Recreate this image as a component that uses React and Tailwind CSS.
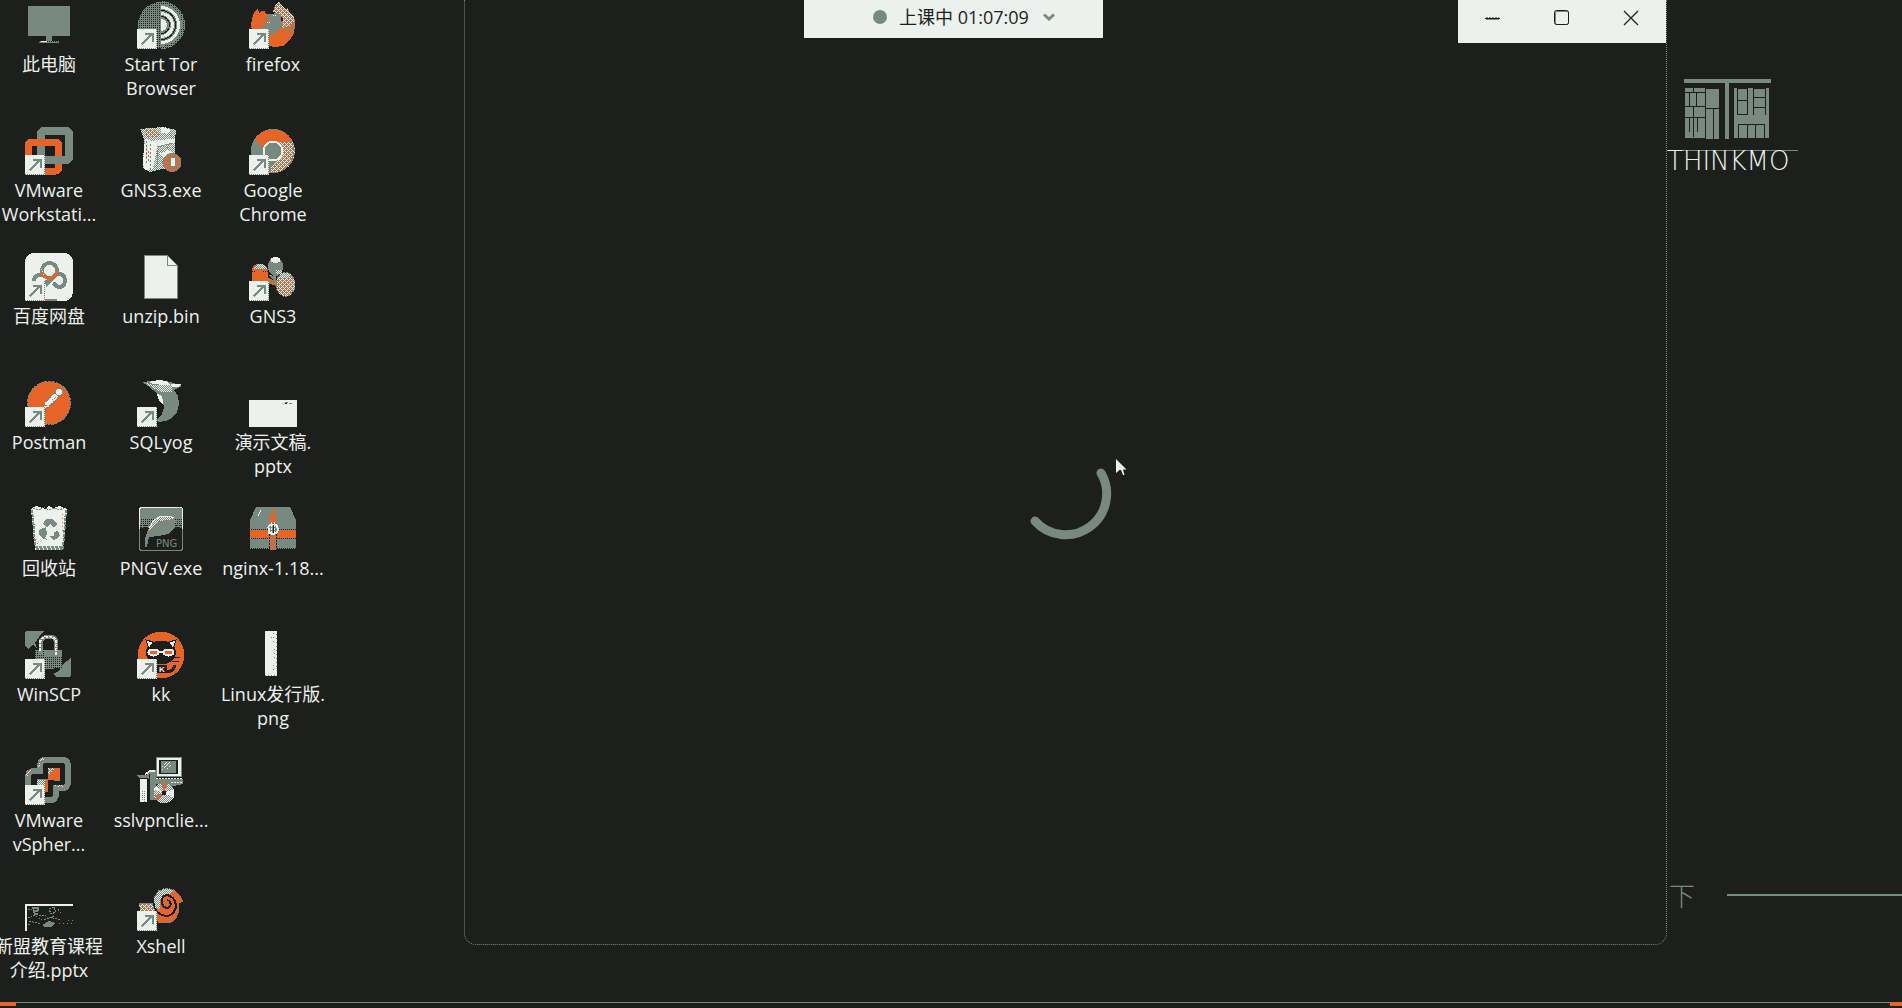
import React from "react";

const D = "#1d1f1c";
const S = "#788a80";
const W = "#edf1ee";
const O = "#e66428";

const SD = "url(#sage-dark)";
const SW = "url(#sage-white)";
const OS = "url(#orange-sage)";
const OW = "url(#orange-white)";

function Checker({ id, a, b, diagonal = true }) {
  return (
    <pattern id={id} width="2" height="2" patternUnits="userSpaceOnUse">
      <rect width="2" height="2" fill={a} />
      <rect width="1" height="1" fill={b} />
      {diagonal && <rect x="1" y="1" width="1" height="1" fill={b} />}
    </pattern>
  );
}

function Patterns() {
  return (
    <svg className="absolute size-0" aria-hidden="true">
      <defs>
        <Checker id="sage-dark" a={S} b={D} diagonal={false} />
        <Checker id="sage-white" a={S} b={W} />
        <pattern id="orange-sage" width="4" height="3" patternUnits="userSpaceOnUse">
          <rect width="4" height="3" fill={O} />
          <path d="M0 0.500H1M2 1.500H3M1 2.500H2M3 0.500H4" stroke={S} />
        </pattern>
        <pattern id="orange-white" width="4" height="4" patternUnits="userSpaceOnUse">
          <rect width="4" height="4" fill={S} />
          <path d="M0 0.500H1M2 0.500H3M1 1.500H2M0 2.500H1M2 2.500H3M3 3.500H4" stroke={W} />
          <path d="M1 0.500H2M3 1.500H4M1 2.500H2M0 3.500H1M2 3.500H3" stroke={O} />
        </pattern>
      </defs>
    </svg>
  );
}

function Shortcut() {
  return (
    <g>
      <rect x="0" y="28" width="20" height="20" fill={W} />
      <path d="M0 47.500H20M19.500 28V48" stroke={S} strokeDasharray="1 1" fill="none" />
      <path d="M4.500 43.500L15 33M7.500 33H15.500V40.500" stroke={S} strokeWidth="2" fill="none" />
    </g>
  );
}

const art = {
  pc: (
    <>
      <rect x="3" y="5" width="42" height="30" fill={S} />
      <rect x="21" y="35" width="6" height="6" fill={S} />
      <rect x="14" y="40" width="20" height="2" fill={SD} />
      <rect x="16" y="40" width="6" height="1" fill={W} />
      <rect x="18" y="41" width="14" height="1" fill={S} />
    </>
  ),
  tor: (
    <>
      <circle cx="24" cy="24" r="23" fill={SD} />
      <path d="M24 3A21 21 0 0 1 24 45Z" fill={S} />
      <path d="M24 1.500A22.500 22.500 0 0 1 24 46.500" stroke={SD} strokeWidth="3" fill="none" />
      <path d="M24 18A6 6 0 0 1 24 30Z" fill={W} />
      <path d="M24 12.500A11.500 11.500 0 0 1 24 35.500M24 6.500A17.500 17.500 0 0 1 24 41.500" stroke={W} strokeWidth="3" fill="none" />
      <path d="M24 15.500A8.500 8.500 0 0 1 24 32.500M24 9.500A14.500 14.500 0 0 1 24 38.500" stroke={D} strokeWidth="1" fill="none" />
    </>
  ),
  firefox: (
    <>
      <path d="M2 23L4 14L6 10L9 7L10 12L13 10L16 10L17 13L22 13L33 20L45 24L45 32L41 39L34 45L25 46L16 44L8 39L3 31Z" fill={O} />
      <path d="M25 7L27 3L30 0L33 5L36 8L39 7L40 11L44 14L46 19V28L38 32L33 26L34 18L30 13L24 11Z" fill={OW} />
      <path d="M46 20V27L44 33L37 34L35 27L42 24Z" fill={OS} />
      <path d="M16 17L21 13L28 12L32 16L33 25L28 32L20 34L14 30L11 25L14 21L20 19Z" fill={S} />
      <path d="M13 19L16 21L22 20L18 24L12 26Z" fill={OS} />
      <path d="M18 21H21M24 14H28" stroke={W} strokeDasharray="1 1" />
    </>
  ),
  vmware: (
    <>
      <rect x="16" y="4" width="28" height="29" rx="3" fill="none" stroke={S} strokeWidth="8" />
      <rect x="3.500" y="15" width="30" height="29" rx="3" fill="none" stroke={O} strokeWidth="7" />
      <path d="M20 33H44" stroke={S} strokeWidth="8" />
    </>
  ),
  gnsBox: (
    <>
      <path d="M3 2L12 1L27 0L39 3L38 14L38 29L37 40L25 42L13 45L6 41L7 12Z" fill={SW} />
      <path d="M8 12L15 14L20 13L38 12V16L20 20L16 42L8 43L6 38Z" fill={W} />
      <path d="M9 3L22 2L20 6L25 9L14 11L8 8Z" fill={OW} />
      <path d="M24 0V6L31 7L33 3L28 1ZM22 27L31 23L36 25L27 30Z" fill={W} />
      <path d="M9 14V38M13 17V42" stroke={S} strokeDasharray="2 2" />
      <path d="M9 21L10 30M11 24V34M29 21L35 18" stroke={O} strokeDasharray="2 2" />
      <path d="M20 20L36 16M21 23L20 38" stroke={S} />
      <circle cx="35" cy="35.500" r="9.500" fill={OS} />
      <circle cx="35" cy="35.500" r="9" fill="none" stroke={S} />
      <rect x="33" y="30" width="5" height="9" fill={W} stroke={S} />
    </>
  ),
  chrome: (
    <>
      <circle cx="24" cy="24" r="22" fill={S} />
      <path d="M24 24L15 22L6 12A22 22 0 0 1 42 12L44 16H26Z" fill={O} />
      <path d="M24 15H44A22 22 0 0 1 25 46L20 44L32 27Z" fill={OW} />
      <path d="M43 16A22 22 0 0 1 25 46" stroke={S} strokeDasharray="2 1" fill="none" />
      <circle cx="24" cy="24" r="9.500" fill={S} stroke={W} strokeWidth="2" />
    </>
  ),
  baidu: (
    <>
      <rect width="48" height="48" rx="9" fill={W} />
      <path d="M9 28Q9 21 18 22M31 21Q40 20 40 28Q39 35 33 34L28 30" stroke={S} strokeWidth="4" fill="none" />
      <path d="M20 27L30 25L21 35Z" fill={S} />
      <circle cx="24.500" cy="17.500" r="7.500" fill={W} stroke={S} strokeWidth="4" />
      <path d="M17 19Q18 25 24.500 25.500Q31 25 32 18" stroke={O} strokeWidth="3" fill="none" />
      <path d="M16 16L19 22" stroke={W} strokeDasharray="1 1" />
      <path d="M20 47H32" stroke={S} strokeWidth="2" />
      <path d="M20 47H23" stroke={O} />
    </>
  ),
  file: (
    <>
      <path d="M7.500 2.500H30.500L40.500 12.500V45.500H7.500Z" fill={W} stroke={S} />
      <path d="M30.500 2.500V12.500H40.500" fill="none" stroke={S} />
    </>
  ),
  gns: (
    <>
      <path d="M18 24L30 30L27 33L19 30Z" fill={OS} />
      <path d="M19 22L27 23V29Z" fill={S} />
      <path d="M3 17Q4 11 11 11Q18 11 19 17V28H3Z" fill={O} />
      <path d="M5 16Q6 11 11 11Q16 11 18 16Z" fill={SW} />
      <path d="M3 18H7M14 18H19" stroke={D} strokeDasharray="1 1" />
      <ellipse cx="26.500" cy="13.500" rx="7.500" ry="9.500" fill={S} />
      <ellipse cx="26.500" cy="7" rx="4.500" ry="3" fill={W} />
      <rect x="27" y="17" width="6" height="4" fill={SW} />
      <ellipse cx="36.500" cy="31.500" rx="9.500" ry="12" fill={OW} stroke={S} strokeDasharray="2 1" />
      <ellipse cx="36" cy="22.500" rx="5" ry="3" fill={SW} />
    </>
  ),
  postman: (
    <>
      <circle cx="24" cy="24" r="21.500" fill={O} stroke={S} strokeDasharray="3 1" />
      <path d="M19 25L28 15L31 14L33 17L32 20L23 28Z" fill={W} stroke={S} strokeDasharray="2 1" />
      <path d="M18 28L23 26L25 27L20 29Z" fill={W} />
      <circle cx="34" cy="13" r="3.500" fill={W} stroke={S} />
      <path d="M27 21L32 18" stroke={S} strokeDasharray="1 1" />
    </>
  ),
  dolphin: (
    <>
      <path d="M5 3L14 2L23 1L34 3L45 7L37 11L41 17L42 25L40 33L35 39L29 42L21 43L20 40L25 35L27 29L26 22L21 15L11 7Z" fill={S} />
      <path d="M9 4L16 6H36L35 13L24 13L16 9Z" fill={SW} />
      <path d="M14 2L23 1L29 2L33 6H25L12 4ZM33 5L44 5L42 8L36 8Z" fill={W} />
      <path d="M20 15L24 16L26 21L26 26L22 21Z" fill={W} />
      <path d="M22 26L26 27L25 35L21 39Z" fill={D} />
    </>
  ),
  slide: (
    <>
      <rect y="21" width="48" height="27" fill={W} />
      <path d="M36 23.500H39M40 24.500H43" stroke={S} />
      <path d="M36 24.500H38" stroke={D} />
    </>
  ),
  bin: (
    <>
      <path d="M6 4L11 1L20 4L24 1L28 3L35 1L42 4L38 45H10Z" fill={W} />
      <path d="M8 3L14 5L19 2L23 5L29 3L34 5L39 3" stroke={S} fill="none" strokeDasharray="2 1" />
      <path d="M6.500 5L8 12L10 41M41 5L38 44M10 41.500H38M11 44H38" stroke={S} strokeWidth="2" fill="none" strokeDasharray="3 1" />
      <path d="M37 9V26M12 38V42" stroke={O} strokeDasharray="1 3" />
      <path d="M18 19L21 14H28L32 19L29 22L25 19L22 22ZM14 25L21 22L22 29L20 33L23 35L18 34L14 30ZM29 27L33 26L35 31L31 34L28 35L25 31L29 31Z" fill={S} />
    </>
  ),
  png: (
    <>
      <rect x="2.500" y="2.500" width="43" height="43" rx="3" fill={D} stroke={S} />
      <rect x="3" y="3" width="42" height="13" fill={S} />
      <rect x="3" y="13" width="42" height="10" fill={SD} />
      <path d="M3 20H12M36 20H45M3 22H10M38 22H45" stroke={D} strokeDasharray="2 1" />
      <path d="M2.500 24V5Q2.500 2.500 5 2.500H43Q45.500 2.500 45.500 5V24" fill="none" stroke={W} />
      <path d="M8 42V33L11 25L15 17L22 12L31 10L37 12L39 16L37 24L31 29L22 31L12 32L10 42Z" fill={S} />
      <path d="M12 24L17 15L24 11H31L37 14L31 15L23 16L18 19L12 26Z" fill={SW} />
      <path d="M12 23L17 15L24 11H32L37 13" stroke={W} fill="none" />
      <path d="M11 27L18 20L25 17L36 15" stroke={O} strokeDasharray="1 2" fill="none" />
      <text x="19" y="42" fill={S} fontFamily="DejaVu Sans, sans-serif" fontSize="10">PNG</text>
    </>
  ),
  chest: (
    <>
      <path d="M7 2H41L47 15V24H1V15Z" fill={S} />
      <rect x="1" y="25" width="46" height="8" fill={O} />
      <path d="M1 24.500H47M1 33.500H47" stroke={S} strokeDasharray="1 1" />
      <rect x="1" y="34" width="46" height="9" fill={S} />
      <path d="M1 43.500H47" stroke={S} strokeDasharray="1 1" />
      <path d="M24 2L20 16H28Z" fill={O} />
      <rect x="21" y="16" width="6" height="29" fill={OS} />
      <path d="M20.500 29V43M27.500 29V43" stroke={D} strokeDasharray="2 1" />
      <rect x="19.500" y="19.500" width="9" height="9" rx="3" fill={S} stroke={W} strokeWidth="2" />
      <path d="M22.500 17V30M25.500 17V30" stroke={W} strokeDasharray="2 1" />
      <path d="M24 20V28" stroke={D} />
      <path d="M9 11L12 5" stroke={W} />
    </>
  ),
  winscp: (
    <>
      <path d="M0 1L2 0H19L14 6L10 12L12 17L8 14L3 18L0 15Z" fill={S} />
      <path d="M46 27V44L44 46H32L28 43L34 40L37 34Z" fill={S} />
      <path d="M10 19H37V37L20 38L10 28Z" fill={SD} />
      <rect x="20" y="19" width="17" height="6" fill={S} />
      <path d="M16 24V12Q16 6 22 6H26Q31 6 31 12V24" fill="none" stroke={S} strokeWidth="4" />
      <path d="M15 20V11Q16 6 22 6H26Q31 7 31 12V24" fill="none" stroke={W} strokeWidth="2" strokeDasharray="3 1" />
      <path d="M20 6H26M31 14V20" fill="none" stroke={O} strokeDasharray="1 3" />
    </>
  ),
  kk: (
    <>
      <circle cx="24" cy="24" r="23.500" fill={O} />
      <ellipse cx="24" cy="21.500" rx="15" ry="12" fill={D} />
      <path d="M9 9L16 11L12 18ZM39 9L32 11L36 18Z" fill={W} stroke={D} />
      <path d="M12 21H36" stroke={W} strokeWidth="2" />
      <ellipse cx="16.500" cy="21.500" rx="5" ry="3" fill={O} stroke={W} strokeWidth="2" />
      <ellipse cx="31.500" cy="21.500" rx="5" ry="3" fill={O} stroke={W} strokeWidth="2" />
      <path d="M35 27L43 26M35 30L42 31" stroke={D} />
      <path d="M29 40Q36 42 38 34" stroke={D} strokeWidth="3" fill="none" />
      <rect x="20" y="34" width="10" height="8" fill={D} />
      <text x="22" y="41" fill={W} fontFamily="Liberation Sans, sans-serif" fontSize="8" fontWeight="700">K</text>
    </>
  ),
  strip: (
    <>
      <rect x="16" width="12" height="45" fill={W} />
      <path d="M24.500 2V12M27.500 3V38M25.500 18V30M22.500 6V9M24.500 34V41" stroke={S} strokeDasharray="1 3" />
      <path d="M16 44.500H28" stroke={S} strokeDasharray="1 2" />
    </>
  ),
  vsphere: (
    <>
      <path d="M19 3H37Q43 3 43 9V25Q43 31 37 31H31V37Q31 43 25 43H9Q3 43 3 37V20Q3 14 9 14H15V9Q15 3 21 3Z" fill={D} stroke={S} strokeWidth="6" />
      <path d="M14 10Q14 2 20 2M2 20Q3 13 8 13M30 29H40" stroke={OW} strokeWidth="2" fill="none" strokeDasharray="2 1" />
      <rect x="23" y="11" width="12" height="12" fill={O} />
      <path d="M23 11H31L23 19Z" fill={OW} />
      <rect x="12" y="22" width="11" height="6" fill={SW} />
      <rect x="20" y="23" width="3" height="12" fill={O} />
      <path d="M29 23H35M12 22.500H23" stroke={S} />
    </>
  ),
  installer: (
    <>
      <path d="M10 17L13 13H19V43H12V24Z" fill={S} />
      <path d="M12 13.500H18M8 17L12 15" stroke={W} strokeWidth="2" />
      <rect x="12" y="17" width="1" height="26" fill={D} />
      <path d="M0 18H11V21H2Z" fill={S} />
      <rect x="3" y="22" width="7" height="23" fill={W} />
      <path d="M5.500 34V44M7.500 34V45" stroke={S} strokeDasharray="1 1" />
      <rect x="19" y="0" width="26" height="20" fill={S} />
      <rect x="20" y="1" width="24" height="18" fill={W} />
      <rect x="22" y="3" width="19" height="14" fill={D} />
      <rect x="24" y="4" width="15" height="12" fill={S} />
      <path d="M25 13L33 5M25 10L30 5M30 12L34 8" stroke={W} strokeDasharray="2 1" />
      <path d="M19 22H46V27L36 29L19 27Z" fill={S} />
      <path d="M19 21.500H45M34 25.500H45" stroke={W} strokeDasharray="2 1" />
      <circle cx="27" cy="36" r="10.500" fill={SW} />
      <path d="M27 36L24 26H31ZM27 36L17 38L21 44Z" fill={OS} />
      <path d="M27 36L37 32V41ZM27 36L17 33L19 30Z" fill={W} />
      <circle cx="27" cy="36" r="2.500" fill={D} />
    </>
  ),
  poster: (
    <>
      <path d="M1 48V22H48" fill="none" stroke={W} strokeWidth="2" />
      <path d="M7 24H14L13 32H9ZM17 42L24 38L31 40L26 44H20Z" fill={S} />
      <path d="M9 26H12M10 29H13" stroke={D} />
      <path d="M3 26H7M3 35L9 32L17 37M4 38L16 41M14 32H21M24 26L29 24L31 29L26 31ZM24 34L36 37M19 37L30 33M33 26L36 31M3 42L6 40" fill="none" stroke={S} strokeDasharray="2 1" />
      <path d="M34 40.500H48M43 37.500H48" stroke={S} strokeDasharray="1 3" />
    </>
  ),
  shell: (
    <>
      <path d="M2 21L15 20L18 26L22 35L5 36Z" fill={OW} />
      <path d="M2 20.500H15L18 27" stroke={S} fill="none" />
      <path d="M17 15L21 8L29 5L37 7L43 13L46 19L42 20L42 29L39 36L33 40H21L19 31Z" fill={O} />
      <path d="M17 15L21 8L29 5L36 7L34 11L27 12L23 17V26L18 25Z" fill={SW} />
      <path d="M17 15L21 8L29 5L37 7L43 13L46 19M42 22L41 30L38 36L33 40L22 39" stroke={S} fill="none" strokeDasharray="3 1" />
      <path d="M18 25Q21 33 31 33Q39 30 39 22Q37 13 30 12Q24 13 25 20Q26 25 31 25Q35 23 33 19L30 17" stroke={D} strokeWidth="2" fill="none" />
      <circle cx="30" cy="20" r="2" fill={OS} />
    </>
  ),
};

const items = [
  ["pc", false, ["此电脑"]],
  ["vmware", true, ["VMware", "Workstati..."]],
  ["baidu", true, ["百度网盘"]],
  ["postman", true, ["Postman"]],
  ["bin", false, ["回收站"]],
  ["winscp", true, ["WinSCP"]],
  ["vsphere", true, ["VMware", "vSpher..."]],
  ["poster", false, ["新盟教育课程", "介绍.pptx"]],
  ["tor", true, ["Start Tor", "Browser"]],
  ["gnsBox", false, ["GNS3.exe"]],
  ["file", false, ["unzip.bin"]],
  ["dolphin", true, ["SQLyog"]],
  ["png", false, ["PNGV.exe"]],
  ["kk", true, ["kk"]],
  ["installer", false, ["sslvpnclie..."]],
  ["shell", true, ["Xshell"]],
  ["firefox", true, ["firefox"]],
  ["chrome", true, ["Google", "Chrome"]],
  ["gns", true, ["GNS3"]],
  ["slide", false, ["演示文稿.", "pptx"]],
  ["chest", false, ["nginx-1.18..."]],
  ["strip", false, ["Linux发行版.", "png"]],
];

function DesktopIcon({ name, shortcut, lines }) {
  return (
    <button type="button" className="flex flex-col items-center pt-px">
      <svg viewBox="0 0 48 48" className="size-12 shrink-0" shapeRendering="crispEdges" aria-hidden="true">
        {art[name]}
        {shortcut && <Shortcut />}
      </svg>
      <span className="mt-[3px] flex flex-col text-center text-[18px] leading-6 whitespace-nowrap">
        {lines.map((line) => (
          <span key={line}>{line}</span>
        ))}
      </span>
    </button>
  );
}

function Brand() {
  return (
    <div className="absolute top-[79px] right-[104px] flex w-[131px] flex-col">
      <svg viewBox="0 0 87 60" className="ml-[17px] h-[60px] w-[87px]" shapeRendering="crispEdges" aria-hidden="true">
        <path d="M0 0H87V4H0ZM41 4H45V60H41ZM1 9H21V59H1ZM22 10H35V60H22ZM50 9H85V59H50Z" fill={S} />
        <path d="M1 13.500H21M1 27.500H21M1 38.500H21M9.500 9V13M5.500 14V27M12.500 14V27M9.500 28V58M5.500 39V53M13.500 39V53M22 29.500H35M29.500 30V60M53.500 9V36M63.500 9V36M69.500 9V36M81.500 9V36M53 21.500H64M53 35.500H64M69 18.500H82M69 28.500H82M54 45.500H81M54.500 45V59M63.500 45V59M71.500 45V59M80.500 45V59M53 9.500H64M69 9.500H82" stroke={D} fill="none" />
      </svg>
      <div className="mt-[11px] border-t border-[#788a80]" />
      <div className="font-['DejaVu_Sans'] text-[26px] leading-5 font-extralight text-[#edf1ee]">THINKMO</div>
    </div>
  );
}

function AppWindow() {
  return (
    <section className="absolute top-0 right-[235px] bottom-[63px] left-[464px] flex flex-col rounded-b-xl border-x border-b border-dotted border-[#788a80] bg-[#1d1f1c]">
      <header className="flex h-[43px] justify-end">
        <div className="flex bg-[#edf1ee] pr-px text-[#1d1f1c]">
          <button type="button" aria-label="Minimize" className="flex w-[69px] items-center justify-center pb-[7px]">
            <svg viewBox="0 0 16 16" className="size-4" shapeRendering="crispEdges">
              <path d="M0 8.500H15" stroke={D} />
              <path d="M1 9.500H14" stroke={S} />
              <path d="M1 7.500H14" stroke={S} strokeDasharray="2 1" />
            </svg>
          </button>
          <button type="button" aria-label="Maximize" className="flex w-[69px] items-center justify-center pb-[7px]">
            <svg viewBox="0 0 16 16" className="size-4">
              <rect x="1.500" y="1.500" width="13" height="13" rx="1.500" fill={W} stroke={S} />
              <rect x="0.500" y="0.500" width="14" height="14" rx="2" fill="none" stroke={D} />
            </svg>
          </button>
          <button type="button" aria-label="Close" className="flex w-[69px] items-center justify-center pb-[7px]">
            <svg viewBox="0 0 16 16" className="size-4">
              <path d="M1 1L15 15M15 1L1 15" stroke={D} strokeWidth="1.300" />
            </svg>
          </button>
        </div>
      </header>
      <div className="flex flex-1 items-center justify-center">
        <svg viewBox="-46 -46 92 92" className="size-[92px]" role="img" aria-label="Loading">
          <path d="M35 -21A41 41 0 0 1 -31 27" fill="none" stroke={S} strokeWidth="9" strokeLinecap="round" />
        </svg>
      </div>
    </section>
  );
}

export default function App() {
  return (
    <main className="relative h-screen overflow-hidden bg-[#1d1f1c] font-['Open_Sans','Noto_Sans_CJK_SC',sans-serif] text-[#edf1ee]">
      <Patterns />
      <nav className="-ml-[7px] grid w-max auto-cols-[112px] grid-flow-col grid-rows-[repeat(8,126px)]">
        {items.map(([name, shortcut, lines]) => (
          <DesktopIcon key={name} name={name} shortcut={shortcut} lines={lines} />
        ))}
      </nav>

      <Brand />
      <div className="absolute right-0 bottom-[97px] flex w-[233px] items-center gap-8">
        <span className="font-['Noto_Sans_CJK_SC'] text-[26px] leading-8 font-light text-[#788a80]">下</span>
        <span className="h-0.5 flex-1 bg-[#788a80]" />
      </div>

      <AppWindow />

      <div className="absolute inset-x-0 top-0 flex justify-center pl-[5px]">
        <button type="button" className="flex h-[38px] w-[299px] items-center bg-[#edf1ee] pb-1 pl-[69px] text-[18px] leading-6 text-[#1d1f1c]">
          <span className="size-3.5 rounded-full bg-[#788a80]" />
          <span className="ml-3">上课中 01:07:09</span>
          <svg viewBox="0 0 12 8" className="ml-3.5 h-2 w-3" aria-hidden="true">
            <path d="M1 1.500L6 6L11 1.500" fill="none" stroke={S} strokeWidth="3" />
          </svg>
        </button>
      </div>

      <svg viewBox="0 0 11 17" className="absolute top-[459px] left-[1116px] h-[17px] w-[11px]" aria-hidden="true">
        <path d="M0 0V14L3.500 11H5L7 16H8.500L7 10.500H10.500Z" fill={W} />
      </svg>

      <footer className="absolute inset-x-0 bottom-0 flex h-1.5 items-start justify-between border-t border-[#788a80]">
        <span className="-mt-px h-1 w-4 bg-[#e66428]" />
        <span className="-mt-px h-1 w-3 bg-[#e66428]" />
      </footer>
    </main>
  );
}
